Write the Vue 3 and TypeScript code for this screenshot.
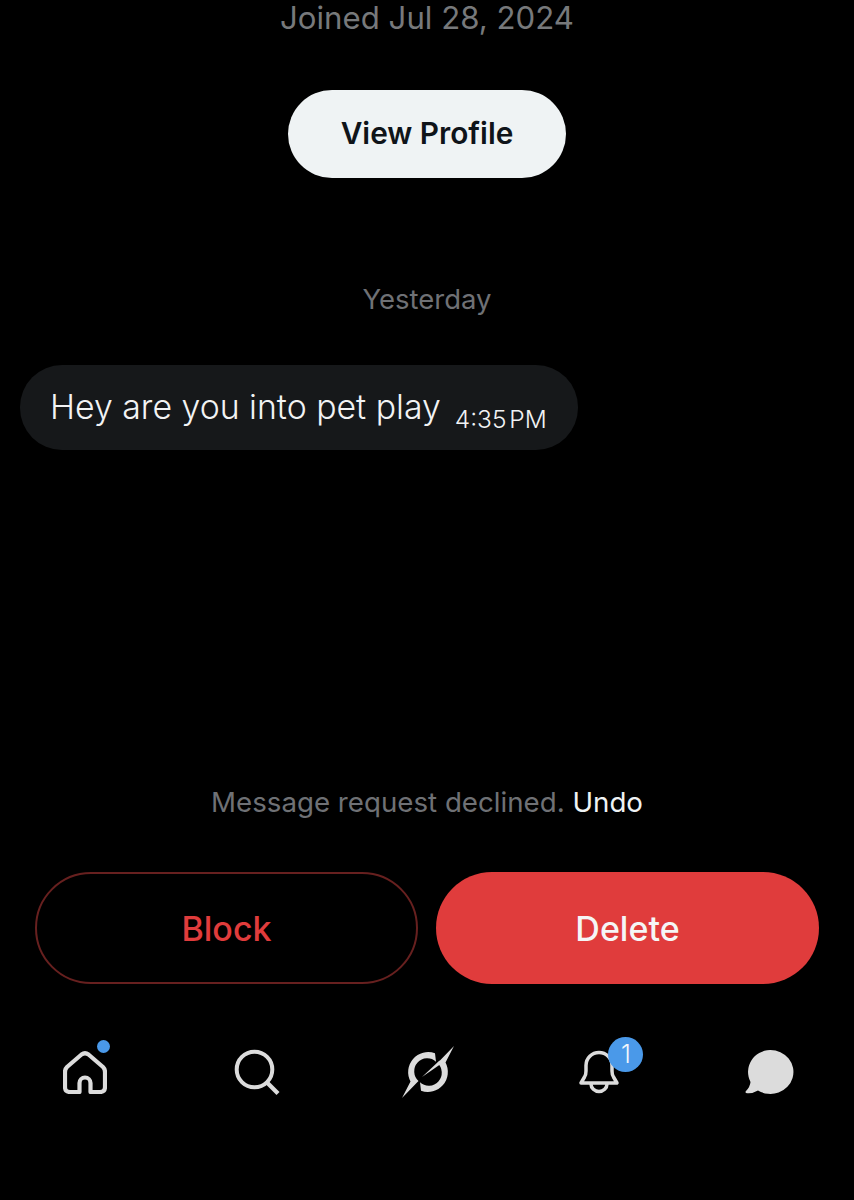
<script setup lang="ts">
const tabs = ['home', 'search', 'explore', 'bell', 'chat']
</script>

<template>
  <div class="screen">
    <div class="joined">Joined Jul 28, 2024</div>
    <button class="view-btn">View Profile</button>
    <div class="day">Yesterday</div>
    <div class="thread">
      <div class="bubble">
        <span class="msg">Hey are you into pet play</span>
        <span class="time">4:35 PM</span>
      </div>
    </div>
    <div class="notice">Message request declined. <span class="undo">Undo</span></div>
    <div class="actions">
      <button class="act block">Block</button>
      <button class="act delete">Delete</button>
    </div>
    <nav class="tabs">
      <div v-for="t in tabs" :key="t" class="tab" :class="'tab-' + t">
        <svg v-if="t === 'home'" width="44" height="44" viewBox="0 0 44 44" fill="none" stroke="#dcdcdc" stroke-width="4.2" stroke-linejoin="round">
          <path d="M4 17 L18.500 4.500 Q22 2 25.500 4.500 L40 17 Q42 19 42 22 V37 Q42 42 37 42 H27.500 V33 A5.500 5.500 0 0 0 16.500 33 V42 H7 Q2 42 2 37 V22 Q2 19 4 17 Z" />
        </svg>
        <svg v-else-if="t === 'search'" width="46" height="46" viewBox="0 0 46 46" fill="none" stroke="#dcdcdc" stroke-width="4">
          <circle cx="20.500" cy="20.500" r="17.800" />
          <path d="M32.500 33 L44 44.500" stroke-width="4.200" />
        </svg>
        <svg v-else-if="t === 'explore'" width="54" height="54" viewBox="0 0 54 54" fill="#dcdcdc">
          <path d="M34 8.300 A20 20 0 0 0 9.500 36.500 L1 53 L17.500 36 A13 13 0 0 1 35 16.700 Z" />
          <path d="M20 45.700 A20 20 0 0 0 44.500 17.500 L53 1 L36.500 18 A13 13 0 0 1 19 37.300 Z" />
          <path d="M38.500 15.500 L21 32 L40.500 18.500 Z" />
        </svg>
        <svg v-else-if="t === 'bell'" width="42" height="44" viewBox="0 0 42 44" fill="none" stroke="#dcdcdc" stroke-width="3.500" stroke-linejoin="round">
          <path d="M3 33 L6.500 27 Q8 25 8 21 V15.500 A13 13 0 0 1 34 15.500 V21 Q34 25 35.500 27 L39 33 Z" />
          <path d="M13 34 A8 7.500 0 0 0 29 34" />
        </svg>
        <svg v-else width="50" height="46" viewBox="0 0 50 46" fill="#dcdcdc">
          <path d="M26 1 A23 22 0 1 1 14 41.500 Q8 45 2 44 Q1 43 2 42 Q6 38 6.500 33 A22.500 22 0 0 1 26 1 Z" />
        </svg>
        <span v-if="t === 'home'" class="dot"></span>
        <span v-if="t === 'bell'" class="badge">1</span>
      </div>
    </nav>
  </div>
</template>

<style>
html,
body {
  margin: 0;
  background: #000;
}
</style>

<style scoped>
.screen {
  width: 854px;
  height: 1200px;
  background: #000;
  display: flex;
  flex-direction: column;
  align-items: center;
  overflow: hidden;
  font-family: Inter, "Liberation Sans", sans-serif;
}
.joined {
  height: 36px;
  line-height: 36px;
  font-size: 31.2px;
  color: #77797b;
}
.view-btn {
  margin-top: 54px;
  width: 278px;
  height: 88px;
  padding: 0 0 2px;
  border: none;
  border-radius: 44px;
  background: #eff3f4;
  color: #0f1419;
  font-family: inherit;
  font-size: 29.800px;
  font-weight: 600;
}
.day {
  margin-top: 103px;
  height: 36px;
  line-height: 36px;
  font-size: 27.500px;
  color: #6f7175;
}
.thread {
  align-self: stretch;
  padding: 48px 20px 0;
}
.bubble {
  width: 558px;
  height: 85px;
  box-sizing: border-box;
  padding: 0 0 2px 30px;
  border-radius: 42px;
  background: #16181a;
  color: #f2f3f4;
  display: flex;
  align-items: center;
}
.msg {
  font-size: 33.800px;
  font-weight: 300;
  white-space: nowrap;
}
.time {
  margin: 24px 0 0 14px;
  font-size: 24.500px;
  font-weight: 300;
  word-spacing: -4px;
  white-space: nowrap;
}
.notice {
  margin-top: 334px;
  height: 36px;
  line-height: 36px;
  font-size: 27.700px;
  color: #6f7175;
}
.undo {
  color: #eff3f4;
}
.actions {
  margin-top: 52px;
  align-self: stretch;
  padding: 0 35px;
  display: grid;
  grid-template-columns: 1fr 1fr;
  gap: 18px;
}
.act {
  height: 112px;
  border-radius: 56px;
  font-family: inherit;
  font-size: 34px;
  font-weight: 500;
}
.block {
  background: transparent;
  border: 2px solid #67201f;
  color: #e03c3c;
}
.delete {
  background: #e03c3c;
  border: none;
  color: #f5f6f6;
}
.tabs {
  margin-top: 60px;
  align-self: stretch;
  display: grid;
  grid-template-columns: repeat(5, 1fr);
}
.tab {
  position: relative;
  height: 56px;
  display: flex;
  align-items: center;
  justify-content: center;
}
.tab-search svg {
  margin-left: 2px;
}
.tab-explore svg {
  margin-left: 3px;
}
.tab-bell svg {
  margin-left: 2px;
}
.dot {
  position: absolute;
  left: 97px;
  top: -4px;
  width: 13px;
  height: 13px;
  border-radius: 50%;
  background: #4a99e9;
}
.badge {
  position: absolute;
  left: 96px;
  top: -7px;
  width: 35px;
  height: 35px;
  border-radius: 50%;
  background: #4a99e9;
  color: #f2f6fb;
  font-size: 25px;
  font-weight: 300;
  line-height: 35px;
  text-align: center;
}
</style>
